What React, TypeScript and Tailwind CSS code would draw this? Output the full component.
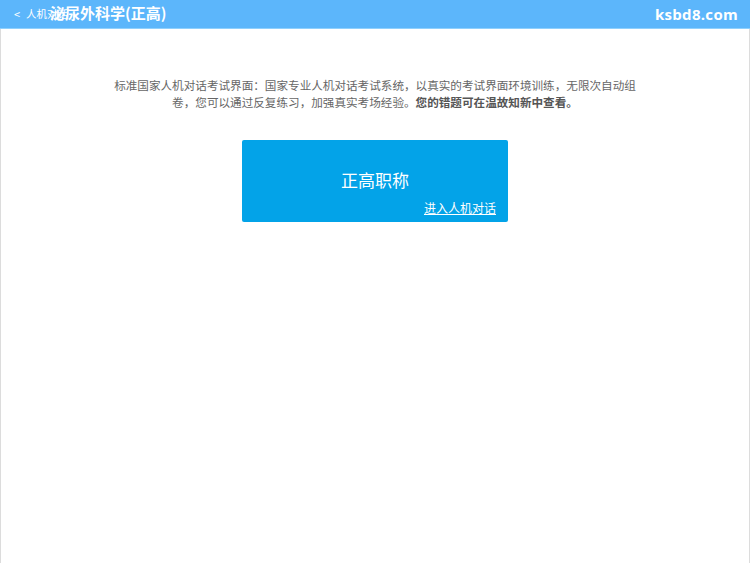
export default function App() {
  return (
    <div
      className="flex h-[563px] w-[750px] flex-col overflow-hidden bg-white"
      style={{ fontFamily: '"Microsoft YaHei", "Noto Sans CJK SC", sans-serif' }}
    >
      {/* Header */}
      <header className="relative flex h-[28px] shrink-0 items-center justify-between bg-[#5cb6fb] px-[14px] text-white">
        <span className="flex items-center gap-[6px] text-[10.5px]">
          <span className="text-[11px]">&lt;</span>
          <span>人机对话</span>
        </span>
        <span className="absolute left-[50px] top-[2px] text-[15px] font-bold leading-[22px]">泌尿外科学(正高)</span>
        <span className="mr-[-2px] text-[15px] font-bold tracking-[0.3px]" style={{ fontFamily: '"Open Sans", sans-serif' }}>
          ksbd8.com
        </span>
      </header>
      <div className="h-px shrink-0 bg-[#8fd0fd]" />

      {/* Content */}
      <main className="flex flex-1 flex-col items-center border-x border-[#dcdcdc] pt-[48px]">
        <p className="w-[535px] text-center text-[11.6px] leading-[17px] text-[#666666]">
          标准国家人机对话考试界面：国家专业人机对话考试系统，以真实的考试界面环境训练，无限次自动组卷，您可以通过反复练习，加强真实考场经验。
          <b className="text-[#555555]">您的错题可在温故知新中查看。</b>
        </p>

        <button
          type="button"
          className="mt-[29px] flex h-[82px] w-[266px] flex-col items-center rounded-[2px] bg-[#03a3e8] text-white"
        >
          <span className="mt-[28px] text-[17px] leading-[24px]">正高职称</span>
          <span className="mt-[8px] self-end pr-[12px] text-[12px] leading-[16px] underline">进入人机对话</span>
        </button>
      </main>
    </div>
  );
}
